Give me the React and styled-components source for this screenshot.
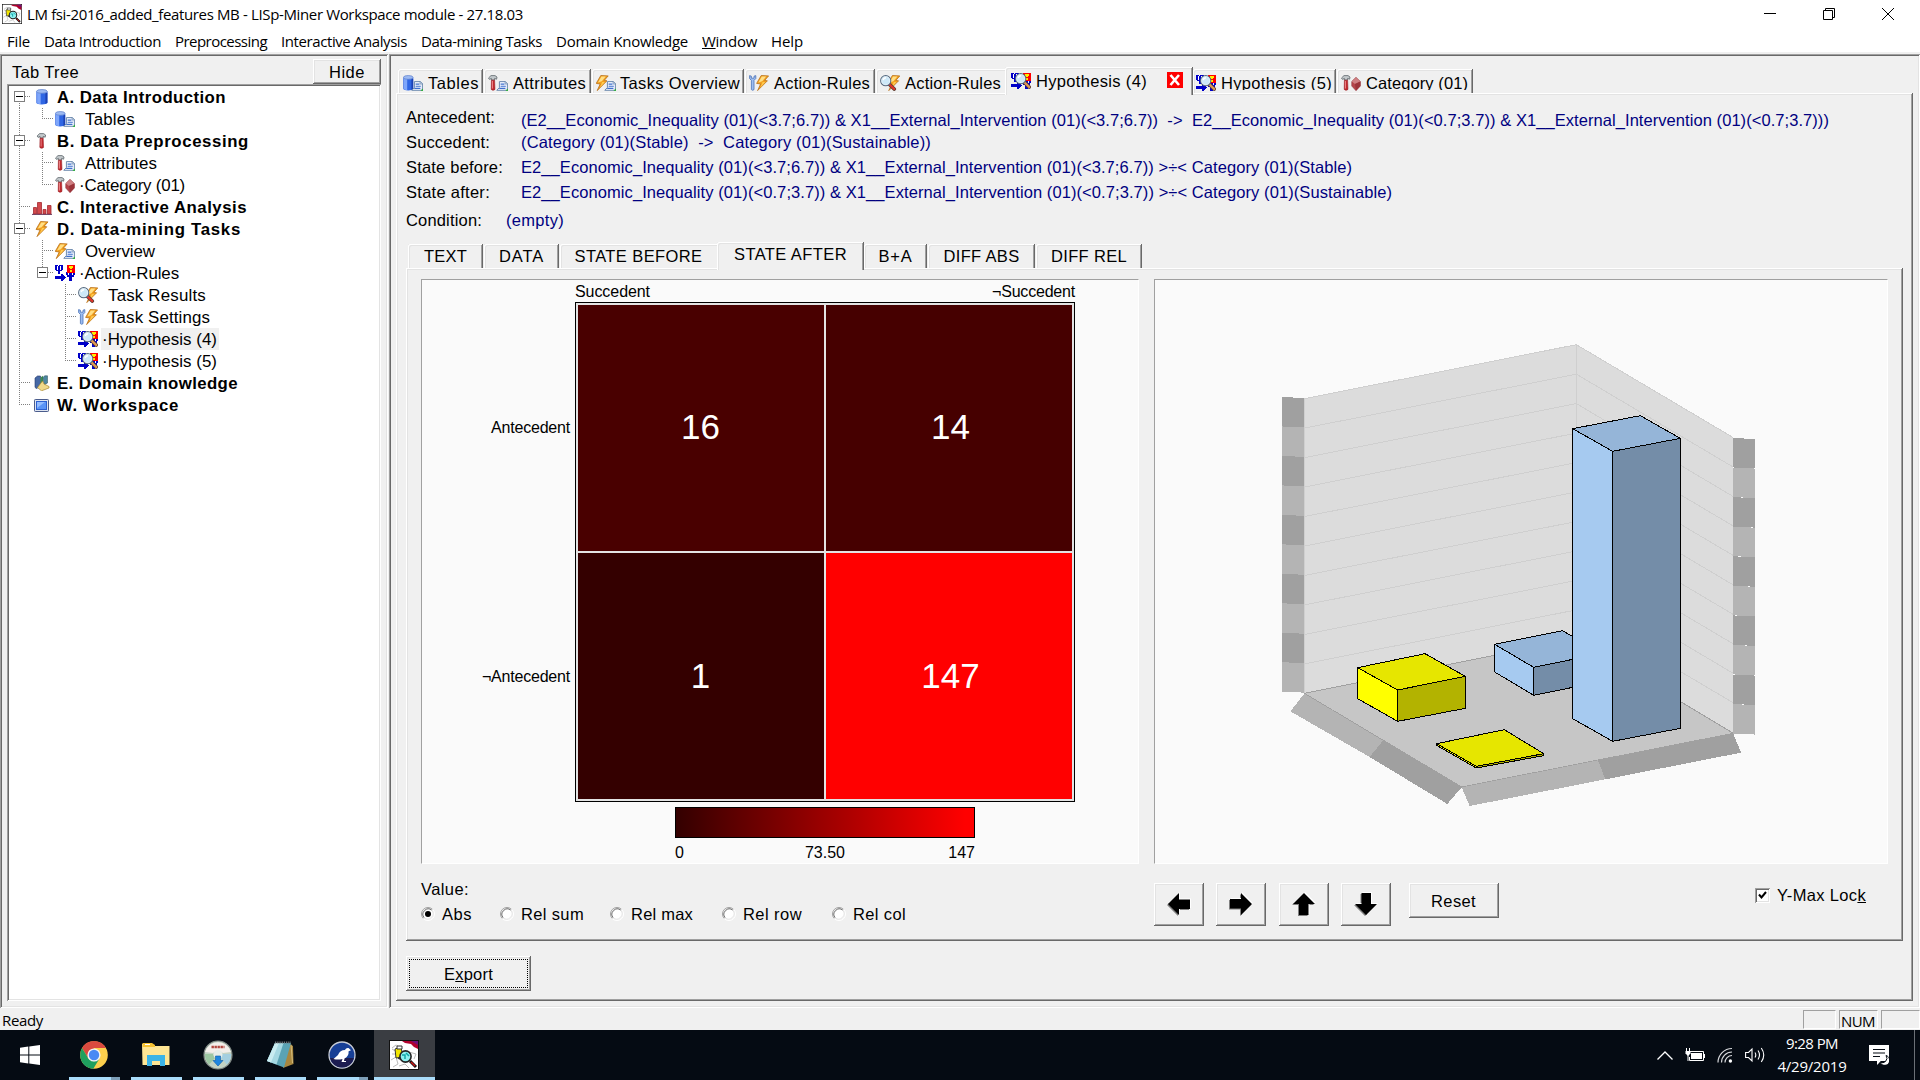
import React, { useLayoutEffect, useRef, useState } from "react";
import styled, { createGlobalStyle, css } from "styled-components";

const GlobalStyle = createGlobalStyle`
  html, body { margin: 0; padding: 0; background: #f0f0f0; }
  body { overflow: hidden; font-family: "Liberation Sans", Arial, sans-serif; font-size: 16.5px; line-height: 16px; color: #000; }
  *, *::before, *::after { box-sizing: border-box; }
  svg { display: block; flex: none; }
`;

const sunken = css`
  box-shadow: inset 1px 1px #a0a0a0, inset -1px -1px #fff, inset 2px 2px #696969, inset -2px -2px #e3e3e3;
`;
const raised = css`
  box-shadow: inset -1px -1px #696969, inset 1px 1px #fff, inset -2px -2px #a0a0a0, inset 2px 2px #e3e3e3;
`;
const segoe = css`
  font-family: "Open Sans", "Noto Sans", sans-serif;
  font-size: 15px;
`;

/* Text whose tracking is adjusted so that the line takes the given width. */
const Line = styled.span`
  display: inline-block;
  white-space: pre;
  flex: none;
`;
function Fit({ w, children }) {
  const ref = useRef(null);
  const [spacing, setSpacing] = useState(0);
  useLayoutEffect(() => {
    const el = ref.current;
    el.style.letterSpacing = "0px";
    const natural = el.getBoundingClientRect().width;
    const gap = (w - natural) / el.textContent.length;
    el.style.letterSpacing = gap + "px";
    setSpacing(gap);
  }, [w]);
  return (
    <Line ref={ref} style={{ letterSpacing: spacing + "px" }}>
      {children}
    </Line>
  );
}

/* ---------- icons ---------- */
const Db = ({ x = 0, wide = 1 }) => (
  <g transform={`translate(${x} 0) scale(${wide} 1)`}>
    <path d="M0.3 2.5V13.7C0.3 16 10.2 16 10.2 13.7V2.5Z" fill="#2f66e4" />
    <path d="M1 3V14.6L4.2 15.2V3.5Z" fill="#7ea6fb" />
    <path d="M8.4 3.5H10.2V13.7L8.4 14.8Z" fill="#1b41b4" />
    <ellipse cx="5.25" cy="2.4" rx="4.8" ry="1.9" fill="#9dbaf2" stroke="#5c80cc" strokeWidth="0.7" />
  </g>
);
const Doc = () => (
  <g>
    <path d="M8.8 15.3L11.4 12.5V6.6H17.4L19.4 8.6V15.3Z" fill="#f2f6ff" stroke="#6d8aae" strokeWidth="1" />
    <path d="M17 6.3L19.8 9.1H17Z" fill="#c3d0e2" stroke="#6d8aae" strokeWidth="0.6" />
    <path d="M12.6 9.1H16.4M12.6 11.3H17.8M11.2 13.4H17.4" stroke="#3f70cc" strokeWidth="1.1" />
    <path d="M17.4 15.8L20 13.4V16Z" fill="#2fae3c" />
  </g>
);
const Hammer = ({ x = 0 }) => (
  <g transform={`translate(${x} 0)`}>
    <path d="M0.5 3L3 0.6H7L9 2L8.6 4.2L6.6 3.4V5H3.4V3.4L1.5 4.4Z" fill="#c3c9cc" stroke="#5d666b" strokeWidth="0.8" />
    <path d="M3.4 5.2H6.6L7 14.4Q5 16.2 3.2 14.4Z" fill="#c22a2f" stroke="#8c171c" strokeWidth="0.5" />
    <path d="M4.5 6V13.5" stroke="#ee8a8c" strokeWidth="0.9" />
  </g>
);
const Bolt = ({ x = 0 }) => (
  <g transform={`translate(${x} 0)`}>
    <path d="M5.6 0.5L13 0.9L9 5.4L11.8 5.8L2 15.6L5 9L1 8.4Z" fill="#f3a01e" stroke="#b9711a" strokeWidth="0.8" />
    <path d="M6.2 1.4L10.6 1.6L6.6 6.2L2.8 7.4Z" fill="#ffdf86" />
    <path d="M7 7L9.6 7L4.8 12.5Z" fill="#ffcb52" />
  </g>
);
const Glass = ({ x = 0, handle = "#e0342c" }) => (
  <g transform={`translate(${x} 0)`}>
    <path d="M9 9L14.2 14" stroke="#5c4034" strokeWidth="3.8" strokeLinecap="round" />
    <path d="M9 9L14.2 14" stroke={handle} strokeWidth="2.2" strokeLinecap="round" />
    <circle cx="5.7" cy="5.7" r="5" fill="#cde8f8" stroke="#56697f" strokeWidth="1.2" />
    <circle cx="5.7" cy="5.7" r="4.1" fill="none" stroke="#f2fbff" strokeWidth="0.7" />
    <path d="M3.2 5.2Q3.6 3 6 2.8" stroke="#fff" strokeWidth="1.4" fill="none" />
  </g>
);
const Psi = () => (
  <g shapeRendering="crispEdges">
    <path d="M0 0H3V1H4V0H8V5H7V6H5V9H3V6H1V5H0Z" fill="#0000c8" />
    <path d="M2 1H3V5H2ZM5 1H6V5H5Z" fill="#fff" />
    <path d="M0 11H6V9H8V10H9V11H10V12H11V13H10V14H9V15H8V16H6V14H0Z" fill="#0000c8" />
    <path d="M11 7H13V10H14V7H17V10H18V7H20V10H19V12H17V16H14V12H12V10H11Z" fill="#0000c8" />
    <rect x="12" y="0" width="8" height="8" fill="#ff0000" />
    <path d="M14 1H18V3H17V4H15V3H14ZM15 5H17V7H15Z" fill="#ffee00" />
  </g>
);
const Gem = () => (
  <g>
    <path d="M15 2.3L19.4 6.5V11L15 15.7L10.7 11V6.5Z" fill="#b5454b" stroke="#8b3338" strokeWidth="0.5" />
    <path d="M15 2.5L10.8 6.5L14 9L19.3 6.5Z" fill="#cf8083" />
    <path d="M14 9L19.3 6.5V11L15 15.6Z" fill="#9b343a" />
  </g>
);
const Wrench = () => (
  <g>
    <path d="M0.6 0.6V3.6L2.4 5.4V14.6Q3.7 16 5 14.6V5.4L6.8 3.6V0.6L5 1.2V3.2H2.4V1.2Z" fill="#9dbdf0" stroke="#4a72b8" strokeWidth="0.8" />
  </g>
);
const drawings = {
  db: <Db x={4} wide={1.12} />,
  tables: <><Db /><Doc /></>,
  hammer: <Hammer x={4.6} />,
  attributes: <><Hammer /><Doc /></>,
  category: <><Hammer /><Gem /></>,
  bars: (
    <g>
      <path d="M1.5 8.5H4.5V15H1.5ZM5.5 3.5H9.5V15H5.5ZM11 10.5H14V15H11ZM15.5 6.5H19V15H15.5Z" fill="#d2484c" stroke="#a52a2f" strokeWidth="0.8" />
      <path d="M0 15.4H20" stroke="#6a3a5c" />
    </g>
  ),
  bolt: <Bolt x={3} />,
  overview: <><Bolt x={-0.8} /><Doc /></>,
  psi: <Psi />,
  results: <><Bolt x={6.8} /><Glass /></>,
  settings: <><Wrench /><Bolt x={6.6} /></>,
  hypothesis: <><Psi /><Glass x={4} handle="#e39a55" /></>,
  books: (
    <g>
      <path d="M3 3L5.5 1H8.5V12L4 13.5L3 12Z" fill="#4668a4" stroke="#22386b" strokeWidth="0.6" />
      <path d="M8.5 2.5L11 0.8V10L8.5 12Z" fill="#3f8a52" />
      <path d="M11 2.5L12.6 0.8H15.5V8L12 10Z" fill="#4c86a0" stroke="#2a4d54" strokeWidth="0.5" />
      <path d="M5.5 12.5L10.5 6L12 9L17 11.5V13L9.5 15.8Z" fill="#f0d98a" stroke="#a8862d" strokeWidth="0.7" />
    </g>
  ),
  monitor: (
    <g>
      <rect x="2.5" y="2.5" width="14" height="12" rx="0.8" fill="#dfe5f0" stroke="#4a5c8c" />
      <rect x="4.5" y="4.5" width="10" height="8" fill="#5a94f6" stroke="#2c5fd0" />
      <path d="M5 5H13L5 11Z" fill="#93bcff" />
    </g>
  ),
};
const Icon = ({ kind }) => (
  <svg width="20" height="16" viewBox="0 0 20 16" fill="none">{drawings[kind]}</svg>
);
const AppIcon = ({ size }) => (
  <svg width={size} height={size} viewBox="0 0 30 30" fill="none">
    <rect x="0.5" y="0.5" width="29" height="29" fill="#fff" stroke="#111" />
    <path d="M3 8L7 5L12 8L8 12L3 9M2 20L7 17L9 24L4 27M10 26L16 24L20 28M20 12L27 14L25 19M3 14H6" stroke="#bbb" />
    <path d="M13 1H29V9L25 7L22 4L16 3Z" fill="#b0002c" />
    <path d="M22 1H29V5Z" fill="#70107a" />
    <path d="M6 9L12 7L14 17L7 18Z" fill="#f2e600" stroke="#333" />
    <path d="M8 6H13V9H8Z" fill="#fff" stroke="#333" />
    <path d="M9 18L14 20" stroke="#333" strokeWidth="1.6" />
    <path d="M21 21L27 27" stroke="#111" strokeWidth="3" />
    <path d="M22 22L26 26" stroke="#d01818" strokeWidth="1.4" />
    <circle cx="16.5" cy="16.5" r="5.6" fill="#8ff0f0" stroke="#222" strokeWidth="1.6" />
    <path d="M13 15H16V19M17 13L20 16" stroke="#12a8a8" strokeWidth="1.5" />
  </svg>
);

/* ---------- window frame ---------- */
const Screen = styled.div`
  width: 1920px;
  height: 1080px;
  display: flex;
  flex-direction: column;
  background: #f0f0f0;
  overflow: hidden;
`;
const TitleBar = styled.header`
  ${segoe}
  height: 29px;
  flex: none;
  display: flex;
  align-items: center;
  gap: 5px;
  padding: 0 26px 1px 2px;
  line-height: 20px;
  background: #fff;
`;
const TitleText = styled.div`
  flex: 1;
`;
const WindowButtons = styled.div`
  display: flex;
  gap: 47px;
`;
const MenuBar = styled.nav`
  ${segoe}
  height: 23px;
  flex: none;
  display: flex;
  gap: 14px;
  padding: 2px 0 0 7px;
  line-height: 20px;
  background: #fff;
`;
const Body = styled.main`
  height: 956px;
  flex: none;
  padding-top: 2px;
  display: flex;
  gap: 1px;
`;
const Button = styled.button`
  ${raised}
  width: ${(p) => p.$w}px;
  height: ${(p) => p.$h}px;
  flex: none;
  padding: 0 0 ${(p) => p.$lift ?? 0}px;
  border: 0;
  background: #f0f0f0;
  font: inherit;
  color: inherit;
  display: flex;
  align-items: center;
  justify-content: center;
`;

/* ---------- tree ---------- */
const LeftPane = styled.aside`
  ${sunken}
  width: 388px;
  flex: none;
  padding: 5px 7px 7px;
  display: flex;
  flex-direction: column;
`;
const PaneHeader = styled.div`
  height: 25px;
  flex: none;
  display: flex;
  justify-content: space-between;
  align-items: center;
  padding-left: 5px;
`;
const Tree = styled.div`
  ${sunken}
  flex: 1;
  padding: 2px;
  background: #fff;
`;
const TreeRow = styled.div`
  height: 22px;
  display: flex;
  align-items: center;
`;
const spans = { none: [0, 0], full: [0, 22], up: [0, 11], down: [11, 11] };
const Guide = styled.span`
  width: 23px;
  height: 22px;
  flex: none;
  padding: 5px 0 0 5px;
  background:
    repeating-linear-gradient(to bottom, #808080 0 1px, transparent 1px 2px) 10px ${(p) => spans[p.$v][0]}px / 1px ${(p) => spans[p.$v][1]}px no-repeat,
    repeating-linear-gradient(to right, #808080 0 1px, transparent 1px 2px) 10px 10px / ${(p) => (p.$h ? 12 : 0)}px 1px no-repeat;
`;
const Expander = styled.span`
  display: block;
  width: 11px;
  height: 11px;
  border: 1px solid #808080;
  background: linear-gradient(#000, #000) 1px 4px / 7px 1px no-repeat #fff;
`;
const TreeLabel = styled.span`
  height: 22px;
  line-height: 23px;
  margin-left: 3px;
  padding: 0 ${(p) => (p.$bold ? 0 : 2)}px 0 ${(p) => (p.$bold ? 2 : p.$dot ? 1 : 7)}px;
  font-size: ${(p) => (p.$bold ? 16.8 : 16.9)}px;
  font-weight: ${(p) => (p.$bold ? 700 : 400)};
  background: ${(p) => (p.$selected ? "#f0f0f0" : "transparent")};
`;
const tree = [
  { g: ["down+"], icon: "db", text: "A. Data Introduction", w: 169, bold: true },
  { g: ["full", "up-"], icon: "tables", text: "Tables", w: 50 },
  { g: ["full+"], icon: "hammer", text: "B. Data Preprocessing", w: 192, bold: true },
  { g: ["full", "full-"], icon: "attributes", text: "Attributes", w: 72 },
  { g: ["full", "up-"], icon: "category", text: "·Category (01)", w: 106, dot: true },
  { g: ["full-"], icon: "bars", text: "C. Interactive Analysis", w: 190, bold: true },
  { g: ["full+"], icon: "bolt", text: "D. Data-mining Tasks", w: 184, bold: true },
  { g: ["full", "full-"], icon: "overview", text: "Overview", w: 70 },
  { g: ["full", "up+"], icon: "psi", text: "·Action-Rules", w: 100, dot: true },
  { g: ["full", "none", "full-"], icon: "results", text: "Task Results", w: 98 },
  { g: ["full", "none", "full-"], icon: "settings", text: "Task Settings", w: 102 },
  { g: ["full", "none", "full-"], icon: "hypothesis", text: "·Hypothesis (4)", w: 115, dot: true, selected: true },
  { g: ["full", "none", "up-"], icon: "hypothesis", text: "·Hypothesis (5)", w: 115, dot: true },
  { g: ["full-"], icon: "books", text: "E. Domain knowledge", w: 181, bold: true },
  { g: ["up-"], icon: "monitor", text: "W. Workspace", w: 122, bold: true },
];

/* ---------- right side ---------- */
const RightPane = styled.section`
  ${sunken}
  flex: 1;
  padding: 13px 7px 7px;
  display: flex;
  flex-direction: column;
`;
const TabStrip = styled.div`
  height: 26px;
  flex: none;
  display: flex;
  align-items: flex-end;
  padding-left: 2px;
`;
const Tab = styled.div`
  width: ${(p) => p.$w}px;
  height: ${(p) => (p.$active ? 28 : 24)}px;
  margin: 0 ${(p) => p.$gap ?? 1}px ${(p) => (p.$active ? -2 : 0)}px 0;
  padding-left: ${(p) => p.$pad ?? 4}px;
  flex: none;
  display: flex;
  gap: ${(p) => p.$space ?? 5}px;
  background: #f0f0f0;
  border-radius: 2px 0 0 0;
  box-shadow: ${(p) => (p.$flat
    ? "inset 1px 1px #fff, inset 2px 2px #e3e3e3"
    : "inset -1px 0 #696969, inset 1px 1px #fff, inset -2px 0 #a0a0a0, inset 2px 2px #e3e3e3")};
  ${(p) => p.$active && css`position: relative;`}
  & > svg { margin-top: 6px; }
`;
const TabLabel = styled.span`
  height: ${(p) => (p.$active ? 25 : p.$clip ? 18 : 21)}px;
  margin-top: ${(p) => (p.$active ? 2 : 3)}px;
  line-height: ${(p) => (p.$active ? 25 : 23)}px;
  overflow: ${(p) => (p.$clip ? "hidden" : "visible")};
`;
const CloseBox = styled.span`
  width: 16px;
  height: 16px;
  margin: 5px 0 0 15px;
  background: #ff0000;
`;
const Panel = styled.div`
  ${raised}
  flex: 1;
  padding: 11px 10px 0 10px;
  display: flex;
  flex-direction: column;
`;
const InfoRow = styled.div`
  height: ${(p) => p.$h ?? 25}px;
  flex: none;
  display: flex;
  align-items: center;
`;
const InfoLabel = styled.span`
  width: ${(p) => p.$w ?? 115}px;
`;
const InfoValue = styled.span`
  color: #000080;
  padding-top: ${(p) => p.$drop ?? 0}px;
`;
const InnerStrip = styled(TabStrip)`
  margin-top: 7px;
`;
const InnerTab = styled(Tab)`
  padding: ${(p) => (p.$active ? "0 0 5px" : "0")};
  align-items: center;
  justify-content: center;
`;
const InnerPanel = styled.div`
  ${raised}
  width: 1497px;
  height: 673px;
  flex: none;
  padding: 11px 0 0 15px;
`;
const Plots = styled.div`
  display: flex;
  gap: 15px;
  font-size: 16px;
`;
const Plot = styled.div`
  width: ${(p) => p.$w}px;
  height: 585px;
  background: #fafafa;
  border: 1px solid;
  border-color: #a0a0a0 #fff #fff #a0a0a0;
`;
const HeatGrid = styled.div`
  display: grid;
  grid-template-columns: 153px 500px;
  grid-template-rows: 20px 500px;
  padding-top: 2px;
`;
const ColLabels = styled.div`
  grid-column: 2;
  display: flex;
  justify-content: space-between;
  line-height: 20px;
`;
const RowLabels = styled.div`
  display: grid;
  grid-template-rows: 1fr 1fr;
  align-items: center;
  justify-items: end;
  padding: 1px 5px 0 0;
`;
const Heat = styled.div`
  display: grid;
  grid-template-columns: 246px 246px;
  grid-template-rows: 246px 246px;
  gap: 2px;
  padding: 2px;
  border: 1px solid #000;
  background: #e3e3e3;
`;
const Cell = styled.div`
  display: flex;
  align-items: center;
  justify-content: center;
  padding: 0 ${(p) => (p.$right ? 0 : 1)}px ${(p) => (p.$low ? 0 : 3)}px ${(p) => (p.$right ? 3 : 0)}px;
  font-size: 35px;
  line-height: 40px;
  color: #fff;
  background: ${(p) => p.$c};
`;
const Legend = styled.div`
  width: 300px;
  margin: 5px 0 0 253px;
`;
const Ramp = styled.div`
  height: 31px;
  border: 1px solid #000;
  background: linear-gradient(to right, #330000, #ff0000 97%);
`;
const Scale = styled.div`
  display: grid;
  grid-template-columns: 1fr auto 1fr;
  margin-top: 5px;
  line-height: 20px;
  & > :last-child { justify-self: end; }
`;
const Scene = styled.div`
  padding: 40px 0 0 105px;
`;
const Controls = styled.div`
  display: flex;
`;
const ValueGroup = styled.div`
  width: 733px;
  padding-top: 16px;
`;
const Caption = styled.div`
  height: 20px;
  line-height: 19px;
`;
const Radios = styled.div`
  height: 20px;
  margin-top: 4px;
  display: flex;
  align-items: center;
`;
const RadioItem = styled.label`
  width: ${(p) => p.$w}px;
  display: flex;
  align-items: center;
  gap: 7px;
`;
const ViewTools = styled.div`
  width: 734px;
  padding-top: 19px;
  display: flex;
  align-items: flex-start;
`;
const Arrows = styled.div`
  display: flex;
  gap: 12.4px;
  margin-right: 17.4px;
`;
const CheckItem = styled.label`
  margin: 3px 0 0 auto;
  padding-right: 22px;
  display: flex;
  align-items: center;
  gap: 7px;
  line-height: 19px;
`;
const CheckBox = styled.span`
  ${sunken}
  width: 15px;
  height: 15px;
  padding: 3px;
  background: #fff;
`;
const ExportRow = styled.div`
  margin-top: 15px;
`;
const Focus = styled.span`
  width: 119px;
  height: 29px;
  display: flex;
  align-items: center;
  justify-content: center;
  border: 1px dotted #000;
`;

/* ---------- status and task bars ---------- */
const StatusBar = styled.footer`
  ${segoe}
  height: 22px;
  flex: none;
  display: flex;
  gap: 3px;
  padding: 2px 0 1px 2px;
  line-height: 21px;
`;
const StatusText = styled.div`
  flex: 1;
`;
const StatusCell = styled.div`
  width: ${(p) => p.$w}px;
  padding-left: 1px;
  line-height: 20px;
  border: 1px solid;
  border-color: #a0a0a0 #fff #fff #a0a0a0;
`;
const TaskBar = styled.div`
  ${segoe}
  height: 50px;
  flex: none;
  display: flex;
  background: #050b13;
  color: #fff;
`;
const StartButton = styled.div`
  width: 63px;
  padding: 15px 0 0 20px;
`;
const TaskSlot = styled.div`
  width: ${(p) => (p.$active ? 61 : 51)}px;
  height: 50px;
  margin: 0 ${(p) => (p.$active ? 0 : 5)}px 0 ${(p) => (p.$active ? 1 : 6)}px;
  padding: 0 1px 0 0;
  display: flex;
  align-items: center;
  justify-content: center;
  background: ${(p) => (p.$active ? "#3a3d42" : "transparent")};
  border-bottom: 3px solid;
  border-image: linear-gradient(to right, #a9dcfa ${(p) => (p.$stacked ? "40px, #7d9fb8 40px" : "100%, #a9dcfa 100%")}) 3;
  border-width: 0 0 3px;
  & > svg { margin-top: 2px; }
`;
const Tray = styled.div`
  margin-left: auto;
  display: flex;
  align-items: center;
`;
const TrayIcon = styled.span`
  margin-right: ${(p) => p.$r}px;
`;
const Clock = styled.div`
  width: 70px;
  display: flex;
  flex-direction: column;
  align-items: center;
  line-height: 23px;
`;
const DesktopEdge = styled.span`
  width: 6px;
  height: 50px;
  margin-left: 25px;
  border-left: 1px solid #6b7076;
`;

const Radio = ({ on }) => (
  <svg width="14" height="14" viewBox="0 0 14 14" fill="none">
    <circle cx="7" cy="7" r="5.6" fill="#fff" />
    <path d="M2.4 11.6A6.4 6.4 0 0 1 11.6 2.4" stroke="#a0a0a0" />
    <path d="M3.2 10.8A5.4 5.4 0 0 1 10.8 3.2" stroke="#696969" />
    <path d="M11.6 2.4A6.4 6.4 0 0 1 2.4 11.6" stroke="#fff" />
    <path d="M10.8 3.2A5.4 5.4 0 0 1 3.2 10.8" stroke="#e3e3e3" />
    {on && <circle cx="7" cy="7" r="3" fill="#000" />}
  </svg>
);

const ARROW = "M0 11L11 0V6.5H22V16H11V22Z";
const Arrow = ({ turn }) => (
  <svg width="26" height="26" viewBox="-2 -2 26 26">
    <path d={ARROW} transform={`translate(-1 1) rotate(${turn} 11 11)`} fill="#808080" />
    <path d={ARROW} transform={`translate(1 -1) rotate(${turn} 11 11)`} fill="#fff" />
    <path d={ARROW} transform={`rotate(${turn} 11 11)`} fill="#000" />
  </svg>
);

/* ---------- 3D chart ---------- */
const steps = [0, 1, 2, 3, 4, 5, 6, 7, 8, 9];
const STEP = 88.4;
const Block = ({ top, base, colors }) => {
  const [l, b, r, f] = top;
  const [bl, bf, br] = base;
  const P = (pts) => pts.map((p) => p.join(",")).join(" ");
  return (
    <g stroke="#000" strokeWidth="3" strokeLinejoin="round">
      <polygon points={P([l, f, bf, bl])} fill={colors[0]} />
      <polygon points={P([f, r, br, bf])} fill={colors[2]} />
      <polygon points={P([l, b, r, f])} fill={colors[1]} />
    </g>
  );
};
const BLUE = ["#a6caf0", "#95b5d8", "#748da8"];
const YELLOW = ["#ffff00", "#e6e600", "#b3b300"];
const Chart = () => (
  <svg width="520" height="500" viewBox="0 0 1560 1500" shapeRendering="crispEdges">
    <polygon points="133,235 949,73 949,957 133,1119" fill="#dcdcdc" />
    <polygon points="949,73 1420,353 1420,1240 949,957" fill="#dcdcdc" />
    {steps.map((k) => (
      <polyline key={k} points={`134,${236 + STEP * k} 949,${74 + STEP * k} 1420,${353 + STEP * k}`} fill="none" stroke="#cfcfcf" strokeWidth="3" />
    ))}
    <path d="M949 73V957M134 235V1119" stroke="#cfcfcf" strokeWidth="3" />
    <polygon points="133,1120 949,957 1420,1240 605,1401" fill="#c6c6c6" stroke="#a0a0a0" strokeWidth="3" />
    {steps.map((k) => (
      <g key={k} fill={k % 2 ? "#b4b4b4" : "#a0a0a0"}>
        <polygon points={`66,${231 + STEP * k} 133,${234 + STEP * k} 133,${234 + STEP * (k + 1)} 66,${231 + STEP * (k + 1)}`} />
        <polygon points={`1419,${354 + STEP * k + k * 0.3} 1485,${357 + STEP * k + k * 0.3} 1485,${357 + STEP * (k + 1) + k * 0.3} 1419,${354 + STEP * (k + 1) + k * 0.3}`} />
      </g>
    ))}
    <polygon points="133,1121 369,1262 329,1311 91,1174" fill="#b4b4b4" />
    <polygon points="369,1262 605,1402 562,1452 329,1311" fill="#a0a0a0" />
    <polygon points="605,1402 1014,1321 1036,1378 629,1458" fill="#b4b4b4" />
    <polygon points="1014,1321 1420,1241 1443,1298 1036,1378" fill="#a0a0a0" />
    <Block top={[[704, 973], [907, 932], [1027, 1000], [821, 1042]]} base={[[704, 1056], [821, 1126], [1027, 1084]]} colors={BLUE} />
    <Block top={[[293, 1043], [495, 1001], [616, 1069], [413, 1110]]} base={[[293, 1136], [413, 1204], [616, 1165]]} colors={YELLOW} />
    <Block top={[[938, 326], [1141, 287], [1261, 355], [1058, 394]]} base={[[938, 1196], [1058, 1264], [1261, 1225]]} colors={BLUE} />
    <Block top={[[530, 1271], [733, 1229], [851, 1301], [649, 1339]]} base={[[530, 1276], [649, 1344], [851, 1307]]} colors={YELLOW} />
  </svg>
);

const mainTabs = [
  { icon: "tables", text: "Tables", t: 51, w: 85, pad: 5 },
  { icon: "attributes", text: "Attributes", t: 73, w: 107 },
  { icon: "overview", text: "Tasks Overview", t: 120, w: 152, space: 4 },
  { icon: "settings", text: "Action-Rules", t: 96, w: 130 },
  { icon: "results", text: "Action-Rules", t: 96, w: 129, gap: 0, flat: true },
  { icon: "hypothesis", text: "Hypothesis (4)", t: 111, w: 188, gap: 0, pad: 6, active: true },
  { icon: "hypothesis", text: "Hypothesis (5)", t: 111, w: 143, pad: 3, clip: true },
  { icon: "category", text: "Category (01)", t: 102, w: 136, pad: 4, clip: true },
];
const innerTabs = [
  { text: "TEXT", t: 43, w: 75 },
  { text: "DATA", t: 45, w: 75 },
  { text: "STATE BEFORE", t: 128, w: 157, gap: 0, flat: true },
  { text: "STATE AFTER", t: 113, w: 147, gap: 0, active: true },
  { text: "B+A", t: 34, w: 63 },
  { text: "DIFF ABS", t: 76, w: 107 },
  { text: "DIFF REL", t: 76, w: 106 },
];
const menus = [
  ["File", 23], ["Data Introduction", 117], ["Preprocessing", 92], ["Interactive Analysis", 126],
  ["Data-mining Tasks", 121], ["Domain Knowledge", 132], [<><u>W</u>indow</>, 55], ["Help", 32],
];

export default function App() {
  return (
    <Screen>
      <GlobalStyle />
      <TitleBar>
        <AppIcon size={20} />
        <TitleText><Fit w={496}>LM fsi-2016_added_features MB - LISp-Miner Workspace module - 27.18.03</Fit></TitleText>
        <WindowButtons>
          <svg width="12" height="12" viewBox="0 0 12 12"><path d="M0 5.5H12" stroke="#000" /></svg>
          <svg width="12" height="12" viewBox="0 0 12 12" fill="none"><path d="M0.5 2.5H9.5V11.5H0.5ZM2.5 2.5V0.5H11.5V9.5H9.5" stroke="#000" /></svg>
          <svg width="12" height="12" viewBox="0 0 12 12"><path d="M0 0L12 12M12 0L0 12" stroke="#000" /></svg>
        </WindowButtons>
      </TitleBar>
      <MenuBar>{menus.map(([m, w], i) => <Fit key={i} w={w}>{m}</Fit>)}</MenuBar>

      <Body>
        <LeftPane>
          <PaneHeader>
            <Fit w={67}>Tab Tree</Fit>
            <Button $w={68} $h={25}><Fit w={36}>Hide</Fit></Button>
          </PaneHeader>
          <Tree>
            {tree.map((r) => (
              <TreeRow key={r.text}>
                {r.g.map((g, i) => (
                  <Guide key={i} $v={g.replace(/[+-]/, "")} $h={/[+-]/.test(g)}>
                    {g.endsWith("+") && <Expander />}
                  </Guide>
                ))}
                <Icon kind={r.icon} />
                <TreeLabel $bold={r.bold} $dot={r.dot} $selected={r.selected}>
                  <Fit w={r.w}>{r.text}</Fit>
                </TreeLabel>
              </TreeRow>
            ))}
          </Tree>
        </LeftPane>

        <RightPane>
          <TabStrip>
            {mainTabs.map((t, i) => (
              <Tab key={i} $w={t.w} $gap={t.gap} $pad={t.pad} $space={t.space} $active={t.active} $flat={t.flat}>
                <Icon kind={t.icon} />
                <TabLabel $active={t.active} $clip={t.clip}><Fit w={t.t}>{t.text}</Fit></TabLabel>
                {t.active && (
                  <CloseBox>
                    <svg width="16" height="16" viewBox="0 0 16 16"><path d="M3.5 3L12 13M12 3L3.5 13" stroke="#fff" strokeWidth="2.6" /></svg>
                  </CloseBox>
                )}
              </Tab>
            ))}
          </TabStrip>
          <Panel>
            <InfoRow>
              <InfoLabel><Fit w={89}>Antecedent:</Fit></InfoLabel>
              <InfoValue $drop={6}><Fit w={1308}>{"(E2__Economic_Inequality (01)(<3.7;6.7)) & X1__External_Intervention (01)(<3.7;6.7))  ->  E2__Economic_Inequality (01)(<0.7;3.7)) & X1__External_Intervention (01)(<0.7;3.7)))"}</Fit></InfoValue>
            </InfoRow>
            <InfoRow>
              <InfoLabel><Fit w={84}>Succedent:</Fit></InfoLabel>
              <InfoValue><Fit w={410}>{"(Category (01)(Stable)  ->  Category (01)(Sustainable))"}</Fit></InfoValue>
            </InfoRow>
            <InfoRow>
              <InfoLabel><Fit w={97}>State before:</Fit></InfoLabel>
              <InfoValue><Fit w={831}>{"E2__Economic_Inequality (01)(<3.7;6.7)) & X1__External_Intervention (01)(<3.7;6.7)) >÷< Category (01)(Stable)"}</Fit></InfoValue>
            </InfoRow>
            <InfoRow>
              <InfoLabel><Fit w={84}>State after:</Fit></InfoLabel>
              <InfoValue><Fit w={871}>{"E2__Economic_Inequality (01)(<0.7;3.7)) & X1__External_Intervention (01)(<0.7;3.7)) >÷< Category (01)(Sustainable)"}</Fit></InfoValue>
            </InfoRow>
            <InfoRow $h={31}>
              <InfoLabel $w={100}><Fit w={76}>Condition:</Fit></InfoLabel>
              <InfoValue><Fit w={58}>(empty)</Fit></InfoValue>
            </InfoRow>
            <InnerStrip>
              {innerTabs.map((t) => (
                <InnerTab key={t.text} $w={t.w} $gap={t.gap} $active={t.active} $flat={t.flat}>
                  <Fit w={t.t}>{t.text}</Fit>
                </InnerTab>
              ))}
            </InnerStrip>
            <InnerPanel>
              <Plots>
                <Plot $w={718}>
                  <HeatGrid>
                    <ColLabels><Fit w={75}>Succedent</Fit><Fit w={83}>¬Succedent</Fit></ColLabels>
                    <RowLabels><Fit w={79}>Antecedent</Fit><Fit w={88}>¬Antecedent</Fit></RowLabels>
                    <Heat>
                      <Cell $c="#490000">16</Cell>
                      <Cell $c="#460000" $right>14</Cell>
                      <Cell $c="#340000" $low>1</Cell>
                      <Cell $c="#ff0000" $low $right>147</Cell>
                    </Heat>
                  </HeatGrid>
                  <Legend>
                    <Ramp />
                    <Scale><span>0</span><span>73.50</span><span>147</span></Scale>
                  </Legend>
                </Plot>
                <Plot $w={734}><Scene><Chart /></Scene></Plot>
              </Plots>
              <Controls>
                <ValueGroup>
                  <Caption><Fit w={48}>Value:</Fit></Caption>
                  <Radios>
                    <RadioItem $w={79}><Radio on /><Fit w={30}>Abs</Fit></RadioItem>
                    <RadioItem $w={110}><Radio /><Fit w={63}>Rel sum</Fit></RadioItem>
                    <RadioItem $w={112}><Radio /><Fit w={62}>Rel max</Fit></RadioItem>
                    <RadioItem $w={110}><Radio /><Fit w={59}>Rel row</Fit></RadioItem>
                    <RadioItem $w={110}><Radio /><Fit w={53}>Rel col</Fit></RadioItem>
                  </Radios>
                </ValueGroup>
                <ViewTools>
                  <Arrows>
                    {[0, 180, 90, 270].map((a) => <Button key={a} $w={50} $h={43} $lift={2}><Arrow turn={a} /></Button>)}
                  </Arrows>
                  <Button $w={90} $h={35}><Fit w={45}>Reset</Fit></Button>
                  <CheckItem>
                    <CheckBox>
                      <svg width="9" height="9" viewBox="0 0 9 9"><path d="M1 3.5L3.5 6.5L8 1" fill="none" stroke="#000" strokeWidth="2" /></svg>
                    </CheckBox>
                    <Fit w={89}>Y-Max Loc<u>k</u></Fit>
                  </CheckItem>
                </ViewTools>
              </Controls>
            </InnerPanel>
            <ExportRow>
              <Button $w={125} $h={35}><Focus><Fit w={49}>E<u>x</u>port</Fit></Focus></Button>
            </ExportRow>
          </Panel>
        </RightPane>
      </Body>

      <StatusBar>
        <StatusText><Fit w={41}>Ready</Fit></StatusText>
        <StatusCell $w={33} />
        <StatusCell $w={39}><Fit w={34}>NUM</Fit></StatusCell>
        <StatusCell $w={39} />
      </StatusBar>

      <TaskBar>
        <StartButton>
          <svg width="20" height="20" viewBox="0 0 20 20" fill="#fff"><path d="M0 2.8L8.3 1.6V9.5H0ZM9.3 1.4L20 0V9.5H9.3ZM0 10.5H8.3V18.4L0 17.2ZM9.3 10.5H20V20L9.3 18.6Z" /></svg>
        </StartButton>
        <TaskSlot $stacked>
          <svg width="28" height="28" viewBox="0 0 28 28">
            <circle cx="14" cy="14" r="13.8" fill="#fdd04d" />
            <path d="M2 7.1A13.8 13.8 0 0 1 26 7.1H14L8.3 17.3Z" fill="#db4a3f" />
            <path d="M2 7.1A13.8 13.8 0 0 0 13.3 27.8L19.7 17.3L14 20.6L8.3 17.3Z" fill="#1fa05e" />
            <circle cx="14" cy="14" r="6.6" fill="#f3f3f3" />
            <circle cx="14" cy="14" r="5.2" fill="#4a8af4" />
          </svg>
        </TaskSlot>
        <TaskSlot>
          <svg width="28" height="26" viewBox="0 0 28 26">
            <path d="M0 2H10L12 4H27.5V23H0.5Z" fill="#ffe694" />
            <path d="M0.5 1H10L13 3V5H0.5Z" fill="#f6c232" />
            <path d="M5 13H23V24H18V19H10V24H5Z" fill="#3cb4e7" />
            <path d="M3 2.5H8" stroke="#fff" />
          </svg>
        </TaskSlot>
        <TaskSlot>
          <svg width="30" height="30" viewBox="0 0 30 30">
            <circle cx="15" cy="15" r="14" fill="#c3d3c4" stroke="#7f8884" strokeWidth="1.2" />
            <path d="M2 12A13.5 13.5 0 0 1 28 12L20 13Q15 9 10 13Z" fill="#f3eeea" />
            <path d="M10 14L1.8 14Q2 20 6 24.5L12 18Z" fill="#9cc7a2" />
            <path d="M19 14L28.2 14Q28 20 24 24.5L18 18Z" fill="#a4cfe0" />
            <circle cx="15" cy="14.5" r="4.5" fill="#e6ece8" />
            <path d="M8.5 7H21.5" stroke="#b0473f" strokeWidth="2.6" strokeDasharray="2.4 0.6" />
            <path d="M12.5 16H17.5V20.5H20L15 26L10 20.5H12.5Z" fill="#1f86e0" stroke="#0c5ca8" strokeWidth="0.6" />
          </svg>
        </TaskSlot>
        <TaskSlot>
          <svg width="28" height="28" viewBox="0 0 28 28">
            <path d="M22 2L27 5L27.5 23L17 27Z" fill="#a8873f" />
            <path d="M25 3.5L26.5 22" stroke="#e0c98a" strokeWidth="0.8" />
            <path d="M9 2H25L18 26.5L1 20Z" fill="#5aa3b4" />
            <path d="M9 2H17.5L10.5 23.5L1 20Z" fill="#a5d8e2" />
            <path d="M9 2H13L5 21.5L1 20Z" fill="#c9ecf1" />
            <path d="M9 1.5H25" stroke="#70777b" strokeWidth="2" strokeDasharray="1.3 0.9" />
          </svg>
        </TaskSlot>
        <TaskSlot $stacked>
          <svg width="28" height="28" viewBox="0 0 28 28">
            <circle cx="14" cy="14" r="13" fill="#173f96" stroke="#c8ccd6" strokeWidth="1.3" />
            <path d="M2 17A12.3 12.3 0 0 0 26 17Z" fill="#1c1c50" />
            <path d="M5.5 18L10 14Q12 9 17 9Q18 6.5 20.5 7L23 9.3L20.6 10.2Q21 15 16.5 17.5L16 20H18V21H13.5L14.5 18Q10 19 5.5 18Z" fill="#fff" />
          </svg>
        </TaskSlot>
        <TaskSlot $active><AppIcon size={30} /></TaskSlot>

        <Tray>
          <TrayIcon $r={12}>
            <svg width="16" height="9" viewBox="0 0 16 9" fill="none"><path d="M0.5 8.5L8 1L15.5 8.5" stroke="#fff" strokeWidth="1.3" /></svg>
          </TrayIcon>
          <TrayIcon $r={12}>
            <svg width="20" height="14" viewBox="0 0 20 14" fill="none">
              <path d="M5 3.5H18.5V12.5H4.5V9" stroke="#fff" /><rect x="6" y="5" width="11" height="6" fill="#fff" />
              <path d="M19.5 6V10M1.5 0V3M4.5 0V3M3 7V13" stroke="#fff" /><path d="M0.5 3H5.5V5.5L3 8L0.5 5.5Z" fill="#fff" />
            </svg>
          </TrayIcon>
          <TrayIcon $r={12}>
            <svg width="16" height="16" viewBox="0 0 16 16" fill="none">
              <path d="M1 15.5A14 14 0 0 1 15 1.5M4.5 15.5A10.5 10.5 0 0 1 15 5M8 15.5A7 7 0 0 1 15 8.5" stroke="#d8dadd" strokeWidth="1.2" />
              <circle cx="13.4" cy="14" r="1.7" fill="#fff" />
            </svg>
          </TrayIcon>
          <TrayIcon $r={12}>
            <svg width="20" height="16" viewBox="0 0 20 16" fill="none">
              <path d="M0.6 5.5H3.5L7 2V14L3.5 10.5H0.6Z" stroke="#fff" strokeWidth="1.1" />
              <path d="M10 5.5Q11.6 8 10 10.5M13 3.5Q16 8 13 12.5M16.3 1Q21.2 8 16.3 15" stroke="#fff" strokeWidth="1.1" />
            </svg>
          </TrayIcon>
          <Clock><Fit w={52}>9:28 PM</Fit><Fit w={69}>4/29/2019</Fit></Clock>
          <TrayIcon $r={0}>
            <svg width="42" height="20" viewBox="-22 0 42 20" fill="none">
              <path d="M0 0H20V16H12L8 20V16H0Z" fill="#fff" />
              <path d="M4 4.5H16M4 8H16M4 11.5H11" stroke="#050b13" strokeWidth="1.2" />
              <path d="M17 10.5A5 5 0 1 1 11 17A4.5 4.5 0 0 0 17 10.5Z" fill="#fff" stroke="#050b13" strokeWidth="1" />
            </svg>
          </TrayIcon>
          <DesktopEdge />
        </Tray>
      </TaskBar>
    </Screen>
  );
}
